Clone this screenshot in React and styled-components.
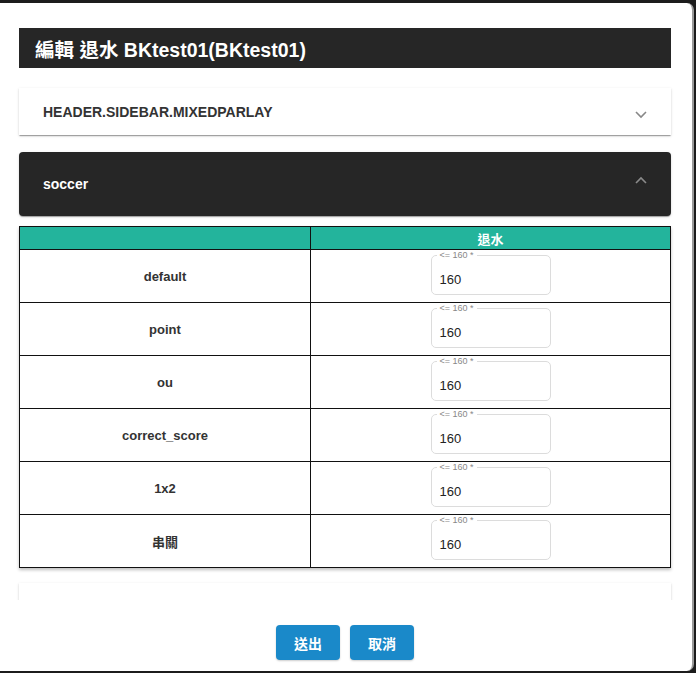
import styled, { createGlobalStyle } from "styled-components";

const GlobalStyle = createGlobalStyle`
  html, body {
    margin: 0;
    padding: 0;
    background: #1c1c1c;
    font-family: "Liberation Sans", "Noto Sans CJK TC", Arial, sans-serif;
  }
  * { box-sizing: border-box; }
`;

const Dialog = styled.div`
  margin-top: 3px;
  width: 694px;
  height: 668px;
  background: #fff;
  border-radius: 0 7px 7px 0;
  border-right: 2px solid #9a9a9a;
  display: flex;
  flex-direction: column;
`;

const Title = styled.h2`
  margin: 25px 21px 0 19px;
  height: 40px;
  background: #262626;
  color: #fff;
  font-size: 19.5px;
  font-weight: bold;
  display: flex;
  align-items: center;
  padding-left: 16px;
`;

const Scroll = styled.div`
  height: 532px;
  overflow: hidden;
  padding: 20px 21px 0 19px;
  display: flex;
  flex-direction: column;
`;

const Card = styled.div`
  background: ${({ dark }) => (dark ? "#262626" : "#fff")};
  color: ${({ dark }) => (dark ? "#fff" : "#333")};
  border-radius: ${({ dark }) => (dark ? "4px" : "0")};
  box-shadow: 0 2px 1px -1px rgba(0, 0, 0, 0.2), 0 1px 1px 0 rgba(0, 0, 0, 0.14),
    0 1px 3px 0 rgba(0, 0, 0, 0.12);
  height: ${({ h }) => h}px;
  margin-bottom: ${({ mb }) => mb}px;
  flex-shrink: 0;
  display: flex;
  align-items: center;
  justify-content: space-between;
  padding: 0 24px;
  font-size: 14px;
  font-weight: bold;
`;

const Chevron = ({ up, color }) => (
  <svg width="12" height="8" viewBox="0 0 12 8" style={{ marginTop: up ? -8 : 6 }}>
    <polyline
      points={up ? "1,7 6,2 11,7" : "1,1 6,6 11,1"}
      fill="none"
      stroke={color}
      strokeWidth="1.6"
    />
  </svg>
);

const Table = styled.table`
  width: 100%;
  border-collapse: collapse;
  flex-shrink: 0;
  box-shadow: 0 2px 3px rgba(0, 0, 0, 0.25);
  margin-bottom: 15px;
`;

const HeadCell = styled.th`
  background: #23b49c;
  color: #fff;
  border: 1px solid #111;
  height: 23px;
  padding: 0;
  font-size: 13px;
  font-weight: bold;
  width: ${({ w }) => w || "auto"};
`;

const Cell = styled.td`
  border: 1px solid #111;
  height: 53px;
  padding: 0;
  text-align: center;
  font-size: 13px;
  font-weight: bold;
  color: #333;
`;

const Field = styled.fieldset`
  margin: 0 auto;
  width: 120px;
  height: 44px;
  border: 1px solid #dcdcdc;
  border-radius: 5px;
  padding: 0 8px;
  position: relative;
  top: -3px;
  text-align: left;
`;

const Legend = styled.legend`
  font-size: 9px;
  color: #888;
  font-weight: normal;
  padding: 0 3px;
  margin-left: -3px;
  line-height: 9px;
`;

const Value = styled.div`
  font-size: 13px;
  font-weight: normal;
  color: #222;
  margin-top: 12px;
`;

const Footer = styled.div`
  flex: 1;
  display: flex;
  justify-content: center;
  align-items: flex-start;
  gap: 10px;
  padding-top: 25px;
  padding-right: 2px;
`;

const Button = styled.button`
  width: 64px;
  height: 35px;
  border: none;
  border-radius: 4px;
  background: #1a89c9;
  color: #fff;
  font-size: 14px;
  font-weight: bold;
  font-family: inherit;
  box-shadow: 0 1px 2px rgba(0, 0, 0, 0.2);
`;

const rows = ["default", "point", "ou", "correct_score", "1x2", "串關"];

export default function App() {
  return (
    <>
      <GlobalStyle />
      <Dialog>
        <Title>編輯 退水 BKtest01(BKtest01)</Title>
        <Scroll>
          <Card h={47} mb={17}>
            <span>HEADER.SIDEBAR.MIXEDPARLAY</span>
            <Chevron color="#888" />
          </Card>
          <Card dark h={64} mb={10}>
            <span>soccer</span>
            <Chevron up color="#8a8a8a" />
          </Card>
          <Table>
            <thead>
              <tr>
                <HeadCell w="291px" />
                <HeadCell>退水</HeadCell>
              </tr>
            </thead>
            <tbody>
              {rows.map((r) => (
                <tr key={r}>
                  <Cell>{r}</Cell>
                  <Cell>
                    <Field>
                      <Legend>{"<= 160 *"}</Legend>
                      <Value>160</Value>
                    </Field>
                  </Cell>
                </tr>
              ))}
            </tbody>
          </Table>
          <Card h={48} mb={0} />
        </Scroll>
        <Footer>
          <Button>送出</Button>
          <Button>取消</Button>
        </Footer>
      </Dialog>
    </>
  );
}
